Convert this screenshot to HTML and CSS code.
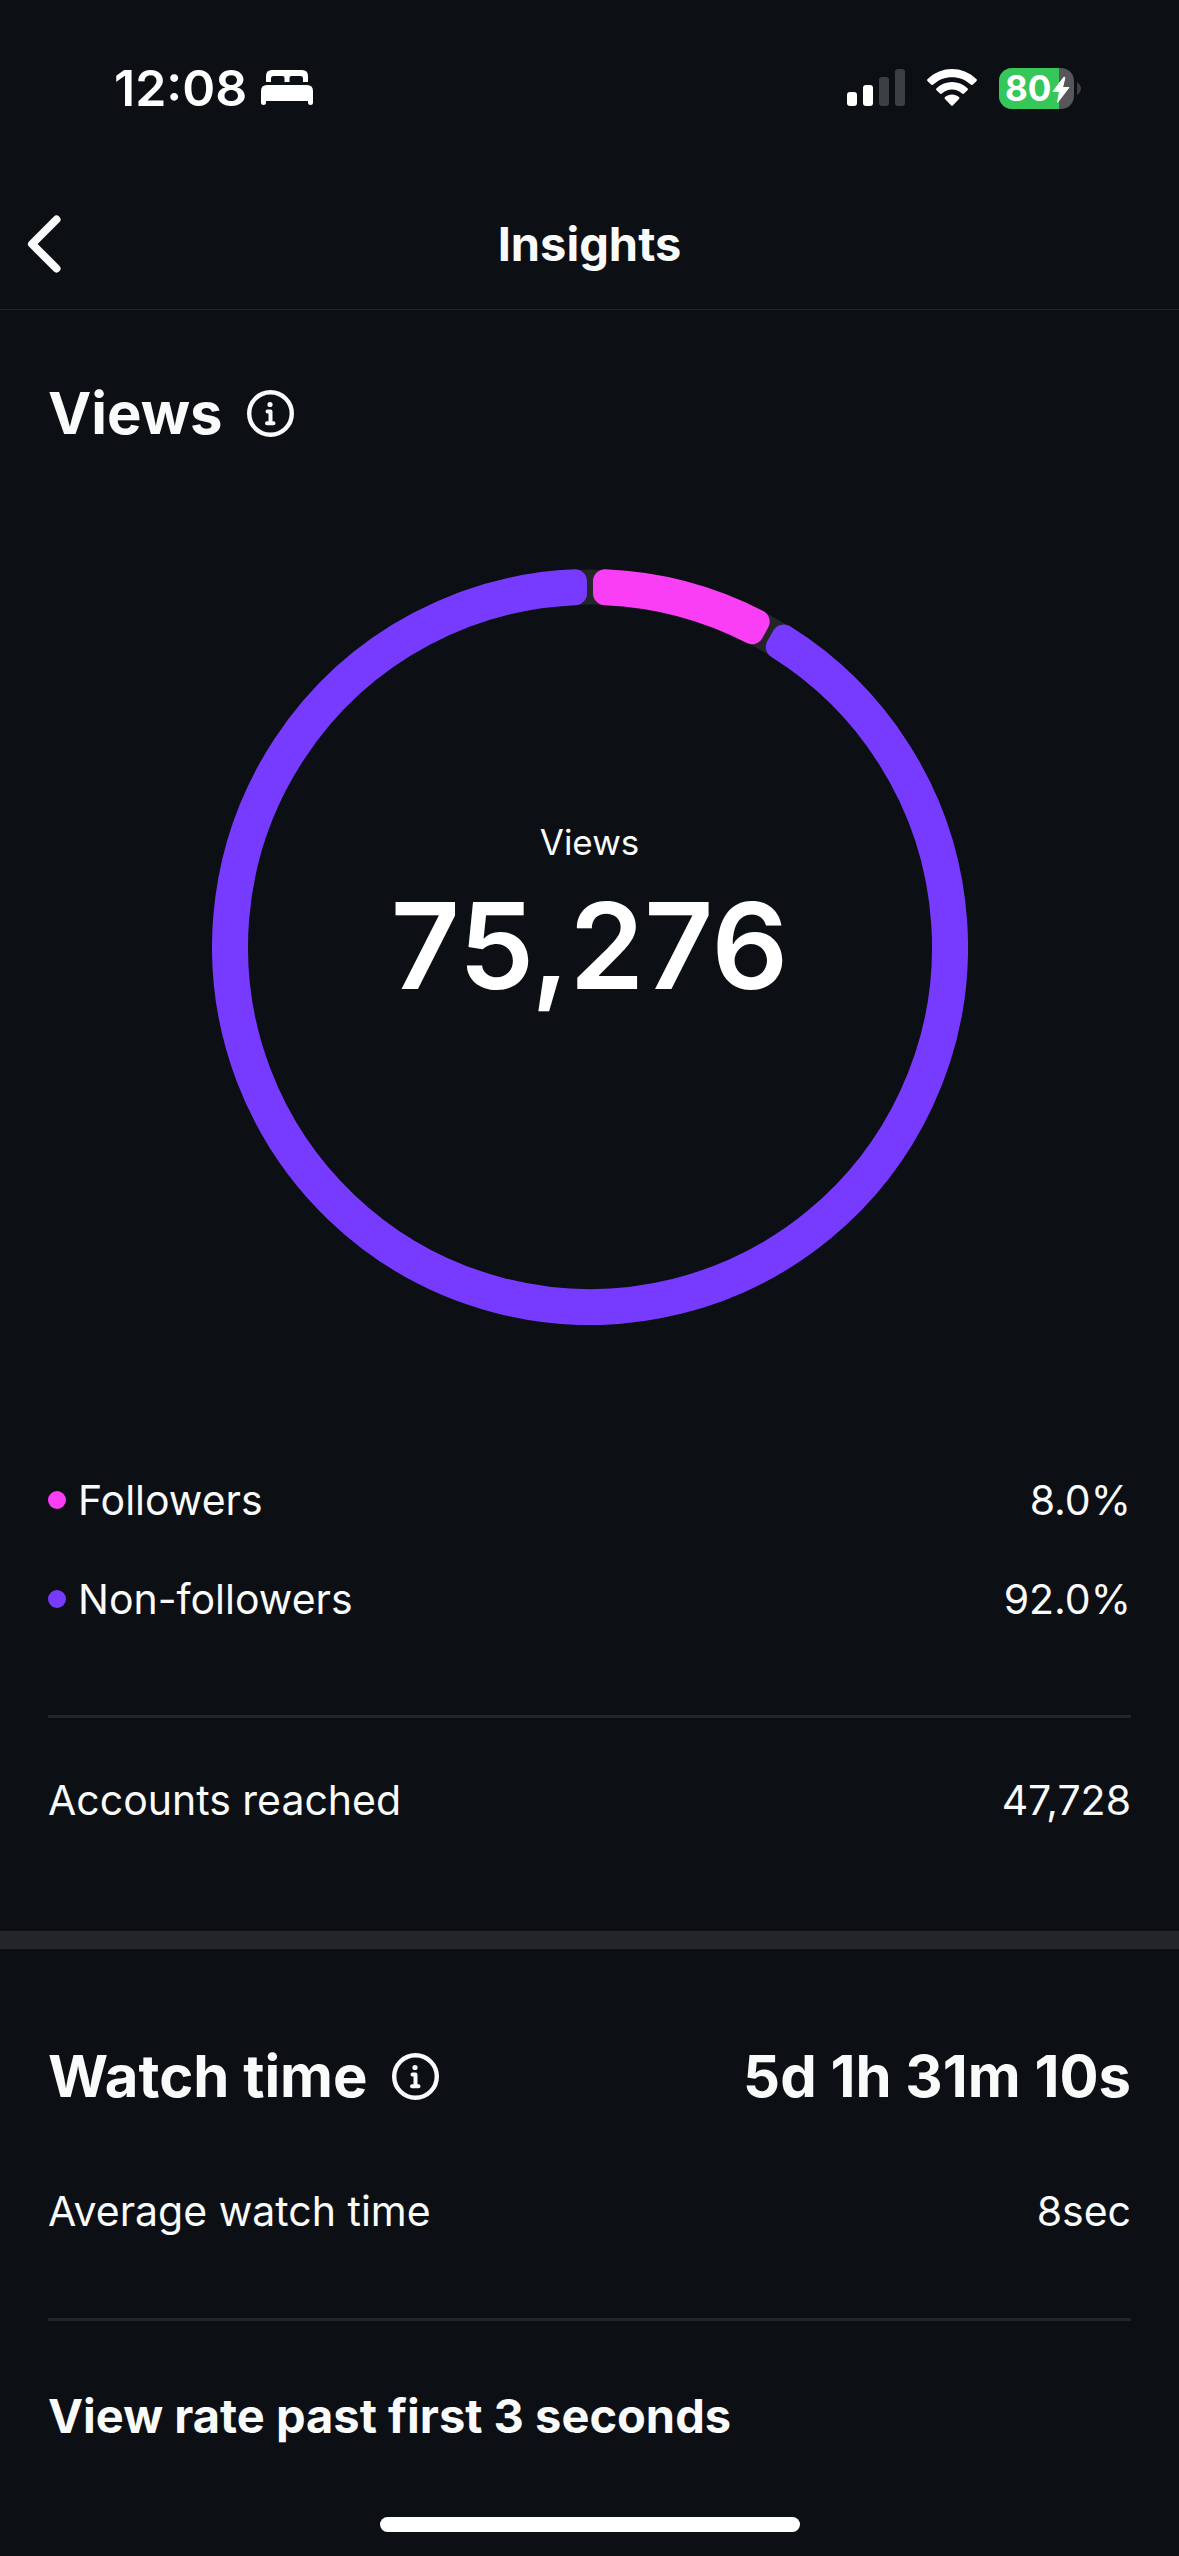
FILE: index.html
```html
<!DOCTYPE html>
<html lang="en">
<head>
<meta charset="utf-8">
<meta name="viewport" content="width=device-width, initial-scale=1">
<title>Insights</title>
<link rel="stylesheet" href="styles.css">
</head>
<body>
<div class="status-bar">
  <div class="status-group">
    <time class="clock">12:08</time>
    <svg class="icon-bed" viewBox="0 0 52 36" width="52" height="36" aria-hidden="true">
      <path d="M5 12V6Q5 0 11 0H41Q47 0 47 6V12H42V8.500Q42 6 39.500 6H30.500Q28.500 6 28.500 8V12H23.500V8Q23.500 6 21.500 6H12.500Q10 6 10 8.500V12Z" fill="#fff"/>
      <path d="M0 33V21Q0 15 6 15H46Q52 15 52 21V33Q52 35 49.500 35T47 33V31H5V33Q5 35 2.500 35T0 33Z" fill="#fff"/>
    </svg>
  </div>
  <div class="status-group status-right">
    <svg viewBox="0 0 58 38" width="58" height="38" aria-hidden="true">
      <rect x="0" y="23" width="10" height="14" rx="3" fill="#fff"/>
      <rect x="16" y="16" width="10" height="21" rx="3" fill="#fff"/>
      <rect x="32" y="8" width="10" height="29" rx="3" fill="#3d4043"/>
      <rect x="48" y="0" width="10" height="37" rx="3" fill="#3d4043"/>
    </svg>
    <svg viewBox="0 0 50 38" width="50" height="38" aria-hidden="true">
      <g fill="#fff">
        <path d="M.7 10Q-.5 11 .6 12.200L4.400 15.700Q5.300 16.500 6.300 15.600C16.500 5.800 33.500 5.800 43.700 15.600Q44.700 16.500 45.600 15.700L49.400 12.200Q50.500 11 49.300 10C35.500-3.300 14.500-3.300.7 10Z"/>
        <path d="M9.500 19.300Q8.500 20.200 9.500 21.200L13 24.500Q13.900 25.400 15 24.500C20.500 19 29.500 19 35 24.500Q36.100 25.400 37 24.500L40.500 21.200Q41.500 20.200 40.500 19.300C31.600 10.800 18.400 10.800 9.500 19.300Z"/>
        <path d="M18 28Q17 29 18 30L24 36.300Q25 37.300 26 36.300L32 30Q33 29 32 28C28 24.600 22 24.600 18 28Z"/>
      </g>
    </svg>
    <svg class="icon-battery" viewBox="0 0 82 41" width="82" height="41" role="img" aria-label="Battery 80 percent, charging">
      <rect width="75" height="41" rx="13" fill="#56565b"/>
      <path d="M13 0H60V41H13A13 13 0 0 1 0 28V13A13 13 0 0 1 13 0Z" fill="#35c759"/>
      <path d="M78 14Q82 17 82 20.500T78 27Z" fill="#3d4043"/>
      <text class="battery-level" x="6" y="33">80</text>
      <path d="M65 9L54 23.500H60.500L58.500 34.500L70 19.500H63.500L66 9.500Z" fill="#fff" stroke="#fff" stroke-linejoin="round"/>
    </svg>
  </div>
</div>

<header class="nav-bar">
  <button class="back-button" type="button" aria-label="Back">
    <svg viewBox="0 0 34 58" width="34" height="58" aria-hidden="true">
      <path d="M29.500 4.500L5 29L29.500 53.500" fill="none" stroke="#f9fafa" stroke-width="8" stroke-linecap="round" stroke-linejoin="round"/>
    </svg>
  </button>
  <h1 class="nav-title">Insights</h1>
</header>

<main>
  <section class="section views">
    <div class="section-head">
      <h2 class="section-title">Views</h2>
      <button class="info-button" type="button" aria-label="About views">
        <svg viewBox="0 0 47 47" width="47" height="47" aria-hidden="true">
          <circle cx="23.500" cy="23.500" r="21.300" fill="none" stroke="#f9fafa" stroke-width="4.400"/>
          <circle cx="23" cy="14.500" r="2.600" fill="#f9fafa"/>
          <path d="M20.500 21.500H23.500V33M20 33.300H26.500" fill="none" stroke="#f9fafa" stroke-width="4" stroke-linecap="round" stroke-linejoin="round"/>
        </svg>
      </button>
    </div>

    <div class="donut">
      <svg class="donut-ring" viewBox="-378 -378 756 756" role="img" aria-label="Followers 8.0%, non-followers 92.0%">
        <circle r="360" fill="none" stroke="#242529" stroke-width="35"/>
        <path class="slice slice-followers" d="M15-365.700A366 366 0 0 1 167.700-325.300L161.900-314.800A354 354 0 0 0 15-353.700Z"/>
        <path class="slice slice-others" d="M193.800-310.500A366 366 0 1 1-15-365.700L-15-353.700A354 354 0 1 0 187.800-300.100Z"/>
      </svg>
      <div class="donut-label">
        <span class="donut-caption">Views</span>
        <strong class="donut-total">75,276</strong>
      </div>
    </div>

    <dl class="stats">
      <div class="stat">
        <dt class="stat-name"><span class="dot dot-followers"></span>Followers</dt>
        <dd class="stat-value">8.0%</dd>
      </div>
      <div class="stat">
        <dt class="stat-name"><span class="dot dot-others"></span>Non-followers</dt>
        <dd class="stat-value">92.0%</dd>
      </div>
    </dl>
    <hr class="rule">
    <dl class="stats">
      <div class="stat">
        <dt class="stat-name">Accounts reached</dt>
        <dd class="stat-value">47,728</dd>
      </div>
    </dl>
  </section>

  <section class="section watch">
    <div class="section-head">
      <h2 class="section-title">Watch time</h2>
      <button class="info-button" type="button" aria-label="About watch time">
        <svg viewBox="0 0 47 47" width="47" height="47" aria-hidden="true">
          <circle cx="23.500" cy="23.500" r="21.300" fill="none" stroke="#f9fafa" stroke-width="4.400"/>
          <circle cx="23" cy="14.500" r="2.600" fill="#f9fafa"/>
          <path d="M20.500 21.500H23.500V33M20 33.300H26.500" fill="none" stroke="#f9fafa" stroke-width="4" stroke-linecap="round" stroke-linejoin="round"/>
        </svg>
      </button>
      <span class="section-title section-total">5d 1h 31m 10s</span>
    </div>
    <dl class="stats">
      <div class="stat">
        <dt class="stat-name">Average watch time</dt>
        <dd class="stat-value">8sec</dd>
      </div>
    </dl>
    <hr class="rule">
    <h3 class="sub-title">View rate past first 3 seconds</h3>
  </section>
</main>
<div class="home-indicator"></div>
</body>
</html>
```

FILE: styles.css
```css
:root {
  --bg: #0c0f14;
  --surface: #242529;
  --text: #f9fafa;
  --pink: #fa3ef5;
  --purple: #773aff;
  --gutter: 48px;
}

* {
  box-sizing: border-box;
}

body {
  margin: 0;
  background: var(--bg);
  color: var(--text);
  font-family: Inter, "Liberation Sans", sans-serif;
  font-size: 41px;
  line-height: 60px;
}

h1,
h2,
h3,
dl,
dd {
  margin: 0;
}

button {
  display: flex;
  padding: 0;
  border: 0;
  background: none;
  cursor: pointer;
}

svg {
  display: block;
  flex: none;
}

.status-bar {
  display: flex;
  align-items: center;
  justify-content: space-between;
  height: 176px;
  padding: 0 98px 0 114px;
}

.status-group {
  display: flex;
  align-items: center;
  gap: 14px;
}

.status-right {
  gap: 22px;
}

.clock {
  color: #fff;
  font-size: 50px;
  font-weight: 600;
}

.battery-level {
  fill: #fff;
  font-size: 35px;
  font-weight: 700;
}

.nav-bar {
  display: grid;
  grid-template-columns: 1fr auto 1fr;
  align-items: center;
  height: 134px;
  padding: 2px 27px 0;
  border-bottom: 1px solid var(--surface);
}

.nav-title,
.sub-title {
  font-size: 47px;
  font-weight: 700;
  line-height: 60px;
}

.section {
  padding: 67px var(--gutter) 0;
}

.section-head {
  display: flex;
  align-items: center;
}

.section-title {
  font-size: 58px;
  font-weight: 700;
  line-height: 72px;
}

.info-button {
  margin-left: 24px;
}

.section-total {
  margin-left: auto;
}

.donut {
  display: grid;
  place-items: center;
  width: 100%;
  max-width: 756px;
  margin: 120px auto 145px;
}

.donut-ring,
.donut-label {
  grid-area: 1 / 1;
}

.donut-ring {
  width: 100%;
}

.slice {
  stroke-width: 24px;
  stroke-linejoin: round;
}

.slice-followers {
  fill: var(--pink);
  stroke: var(--pink);
}

.slice-others {
  fill: var(--purple);
  stroke: var(--purple);
}

.donut-label {
  display: flex;
  flex-direction: column;
  align-items: center;
  padding-bottom: 50px;
}

.donut-caption {
  font-size: 35px;
  line-height: 48px;
}

.donut-total {
  color: #fff;
  font-size: 120px;
  font-weight: 600;
  line-height: 160px;
}

.stats {
  display: grid;
  gap: 39px;
}

.stat {
  display: flex;
  justify-content: space-between;
}

.stat-name {
  display: flex;
  align-items: center;
  gap: 12px;
}

.dot {
  width: 18px;
  height: 18px;
  border-radius: 50%;
}

.dot-followers {
  background: var(--pink);
}

.dot-others {
  background: var(--purple);
}

.rule {
  height: 3px;
  margin: 86px 0 52px;
  border: 0;
  background: var(--surface);
}

.views {
  padding-bottom: 101px;
  border-bottom: 18px solid var(--surface);
}

.watch {
  padding-top: 91px;
}

.watch .stats {
  margin-top: 69px;
}

.watch .rule {
  margin: 77px 0 65px;
}

.home-indicator {
  width: 420px;
  max-width: 60%;
  height: 15px;
  margin: 71px auto 24px;
  border-radius: 8px;
  background: #fff;
}
```
